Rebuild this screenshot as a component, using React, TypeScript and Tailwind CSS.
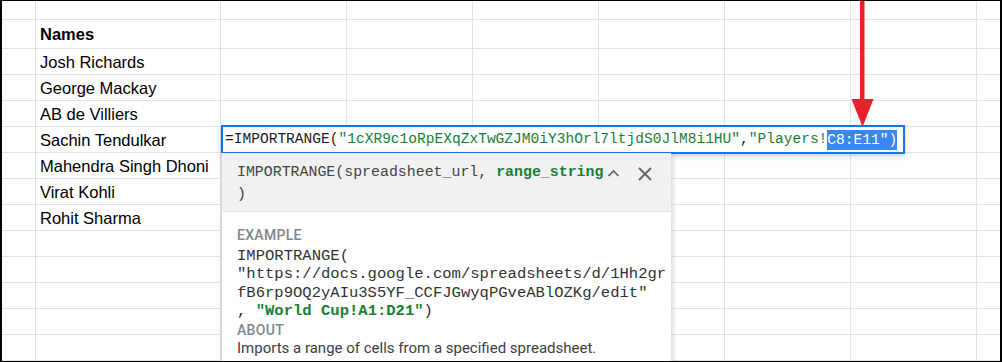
const rowHeights = [
  "h-[19px]",
  "h-[29px]",
  "h-[26px]",
  "h-[26px]",
  "h-[26px]",
  "h-[26px]",
  "h-[26px]",
  "h-[26px]",
  "h-[26px]",
  "h-[26px]",
  "h-[26px]",
  "h-[26px]",
  "h-[26px]",
  "h-[26px]",
];

const colWidths = [
  "w-[34px]",
  "w-[185px]",
  "w-[126px]",
  "w-[126px]",
  "w-[126px]",
  "w-[126px]",
  "w-[126px]",
  "w-[126px]",
  "w-[23px]",
];

const names = [
  "",
  "Names",
  "Josh Richards",
  "George Mackay",
  "AB de Villiers",
  "Sachin Tendulkar",
  "Mahendra Singh Dhoni",
  "Virat Kohli",
  "Rohit Sharma",
];

function ChevronUp() {
  return (
    <svg width="13" height="8" viewBox="0 0 13 8" className="mt-[8px] ml-[4px] shrink-0">
      <polyline points="1.5,7 6.5,2 11.5,7" fill="none" stroke="#5f6368" strokeWidth="1.7" />
    </svg>
  );
}

function CloseIcon() {
  return (
    <svg width="14" height="14" viewBox="0 0 14 14" className="mt-[6px] ml-[18px] shrink-0">
      <path d="M1 1 L13 13 M13 1 L1 13" stroke="#5f6368" strokeWidth="1.8" />
    </svg>
  );
}

function Grid() {
  return (
    <div className="flex flex-col">
      {rowHeights.map((h, r) => (
        <div key={r} className={`flex ${h}`}>
          {colWidths.map((w, c) => (
            <div
              key={c}
              className={`${w} shrink-0 border-b border-[#e2e2e2] ${c < colWidths.length - 1 ? "border-r" : ""} flex items-center overflow-visible whitespace-nowrap`}
            >
              {c === 1 && names[r] ? (
                <span
                  className={`pl-[4px] pt-[1px] text-[16.5px] text-black font-['Liberation_Sans',Arial,sans-serif] ${r === 1 ? "font-bold" : ""}`}
                >
                  {names[r]}
                </span>
              ) : null}
            </div>
          ))}
        </div>
      ))}
    </div>
  );
}

function FormulaBox() {
  return (
    <div className="absolute left-[219px] top-[124px] w-[684px] h-[29px] border-2 border-[#1a73e8] bg-white shadow-[0_2px_5px_rgba(60,64,67,0.25)] flex items-center pl-[2px] whitespace-pre font-['Liberation_Mono',monospace] text-[14.55px] text-[#202124]">
      <span>=IMPORTRANGE(</span>
      <span className="text-[#188038]">"1cXR9c1oRpEXqZxTwGZJM0iY3hOrl7ltjdS0JlM8i1HU"</span>
      <span>,</span>
      <span className="text-[#188038]">"Players!</span>
      <span className="bg-[#3a87f0] text-white leading-[20px]">C8:E11")</span>
    </div>
  );
}

function HelpPopup() {
  return (
    <div className="absolute left-[219px] top-[152px] w-[450px] h-[220px] bg-white border-l border-[#d4d4d4] shadow-[2px_2px_5px_rgba(60,64,67,0.2)]">
      <div className="h-[59px] bg-[#f1f1f1] border-b border-[#e3e3e3] pt-[8px] pl-[15px] flex items-start">
        <div className="font-['Liberation_Mono',monospace] text-[14.9px] leading-[22px] text-[#444] whitespace-pre">
          IMPORTRANGE(spreadsheet_url,{" "}
          <span className="font-bold text-[#188038]">range_string</span>
          <br />)
        </div>
        <ChevronUp />
        <CloseIcon />
      </div>
      <div className="pl-[15px] pt-[14px]">
        <div className="font-['Roboto',sans-serif] font-medium text-[14px] leading-[18px] tracking-[0.3px] text-[#80868b]">
          EXAMPLE
        </div>
        <div className="mt-[3px] font-['Liberation_Mono',monospace] text-[15.55px] leading-[18.3px] text-[#333] whitespace-pre">
          IMPORTRANGE(
          <br />
          "https://docs.google.com/spreadsheets/d/1Hh2gr
          <br />
          fB6rp9OQ2yAIu3S5YF_CCFJGwyqPGveABlOZKg/edit"
          <br />
          , <span className="font-bold text-[#188038]">"World Cup!A1:D21"</span>)
        </div>
        <div className="mt-[1px] font-['Roboto',sans-serif] font-medium text-[14px] leading-[18px] tracking-[0.3px] text-[#80868b]">
          ABOUT
        </div>
        <div className="font-['Roboto',sans-serif] text-[15px] leading-[18px] text-[#3c4043]">
          Imports a range of cells from a specified spreadsheet.
        </div>
      </div>
    </div>
  );
}

function RedArrow() {
  return (
    <svg
      width="30"
      height="130"
      viewBox="0 0 30 130"
      className="absolute left-[848px] top-[-1px]"
    >
      <rect x="10" y="0" width="4.5" height="102" fill="#e8222a" />
      <polygon points="1.5,99 23.5,99 12.5,127" fill="#e8222a" />
    </svg>
  );
}

export default function App() {
  return (
    <div className="relative w-[1002px] h-[362px] overflow-hidden bg-white border-t border-b border-l-2 border-r-2 border-black">
      <Grid />
      <FormulaBox />
      <HelpPopup />
      <RedArrow />
    </div>
  );
}
